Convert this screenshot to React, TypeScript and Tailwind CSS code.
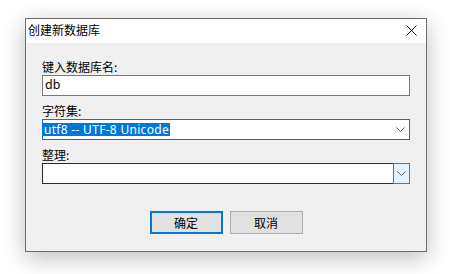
const cjk = "font-['Noto_Sans_CJK_SC','Noto_Sans',sans-serif]"
const latin = "font-['Noto_Sans','Noto_Sans_CJK_SC',sans-serif]"

function Chevron() {
  return (
    <svg width="9" height="5" viewBox="0 0 9 5" fill="none" stroke="#5f5f5f" strokeWidth="1">
      <path d="M0.5 0.5 L4.5 4.5 L8.5 0.5" />
    </svg>
  )
}

function Field({ label, children, first }: { label: string; children: React.ReactNode; first?: boolean }) {
  return (
    <div className={first ? '' : 'mt-[7px]'}>
      <div className="h-[16px] leading-[16px] text-[12px] text-black">{label}</div>
      {children}
    </div>
  )
}

export default function App() {
  return (
    <div className="w-[450px] h-[274px] bg-white pt-[18px] pl-[25px]">
      <div
        className={`${cjk} w-[402px] h-[234px] border border-[#6d6d6d] bg-[#f0f0f0] flex flex-col shadow-[0_6px_22px_rgba(0,0,0,0.26)]`}
      >
        <div className="h-[24px] bg-white flex items-center justify-between pl-[2px] pr-[9px]">
          <span className="text-[12px] leading-[16px] pb-[3px] text-black">创建新数据库</span>
          <svg width="11" height="11" viewBox="0 0 11 11" stroke="#111" strokeWidth="1" className="mb-[2px]">
            <path d="M0.5 0.5 L10.5 10.5 M10.5 0.5 L0.5 10.5" />
          </svg>
        </div>

        <div className="flex-1 flex flex-col px-[16px] pt-[16px]">
          <Field label="键入数据库名:" first>
            <div className={`${latin} h-[21px] border border-[#7a7a7a] bg-white flex items-center pl-[2px] text-[12.5px] text-black`}>
              db
            </div>
          </Field>

          <Field label="字符集:">
            <div className="h-[21px] border border-[#0078d7] bg-white flex items-center justify-between pl-0 pr-[4px]">
              <span className={`${latin} bg-[#0078d7] text-white text-[12px] tracking-[0.3px] leading-[13px] h-[13px] px-[1px] flex items-center`}>
                utf8 -- UTF-8 Unicode
              </span>
              <Chevron />
            </div>
          </Field>

          <Field label="整理:">
            <div className="h-[21px] border border-[#2b2b2b] bg-white flex justify-end">
              <div className="w-[17px] -my-[1px] -mr-[1px] border border-[#3a7cc4] bg-[#e5f1fb] flex items-center justify-center">
                <Chevron />
              </div>
            </div>
          </Field>

          <div className="mt-[27px] flex justify-center gap-[7px] text-[12px] text-black">
            <button className="w-[73px] h-[23px] border-2 border-[#0078d7] bg-[#e1e1e1] leading-[16px]">确定</button>
            <button className="w-[73px] h-[23px] border border-[#adadad] bg-[#e1e1e1] leading-[16px]">取消</button>
          </div>
        </div>
      </div>
    </div>
  )
}
